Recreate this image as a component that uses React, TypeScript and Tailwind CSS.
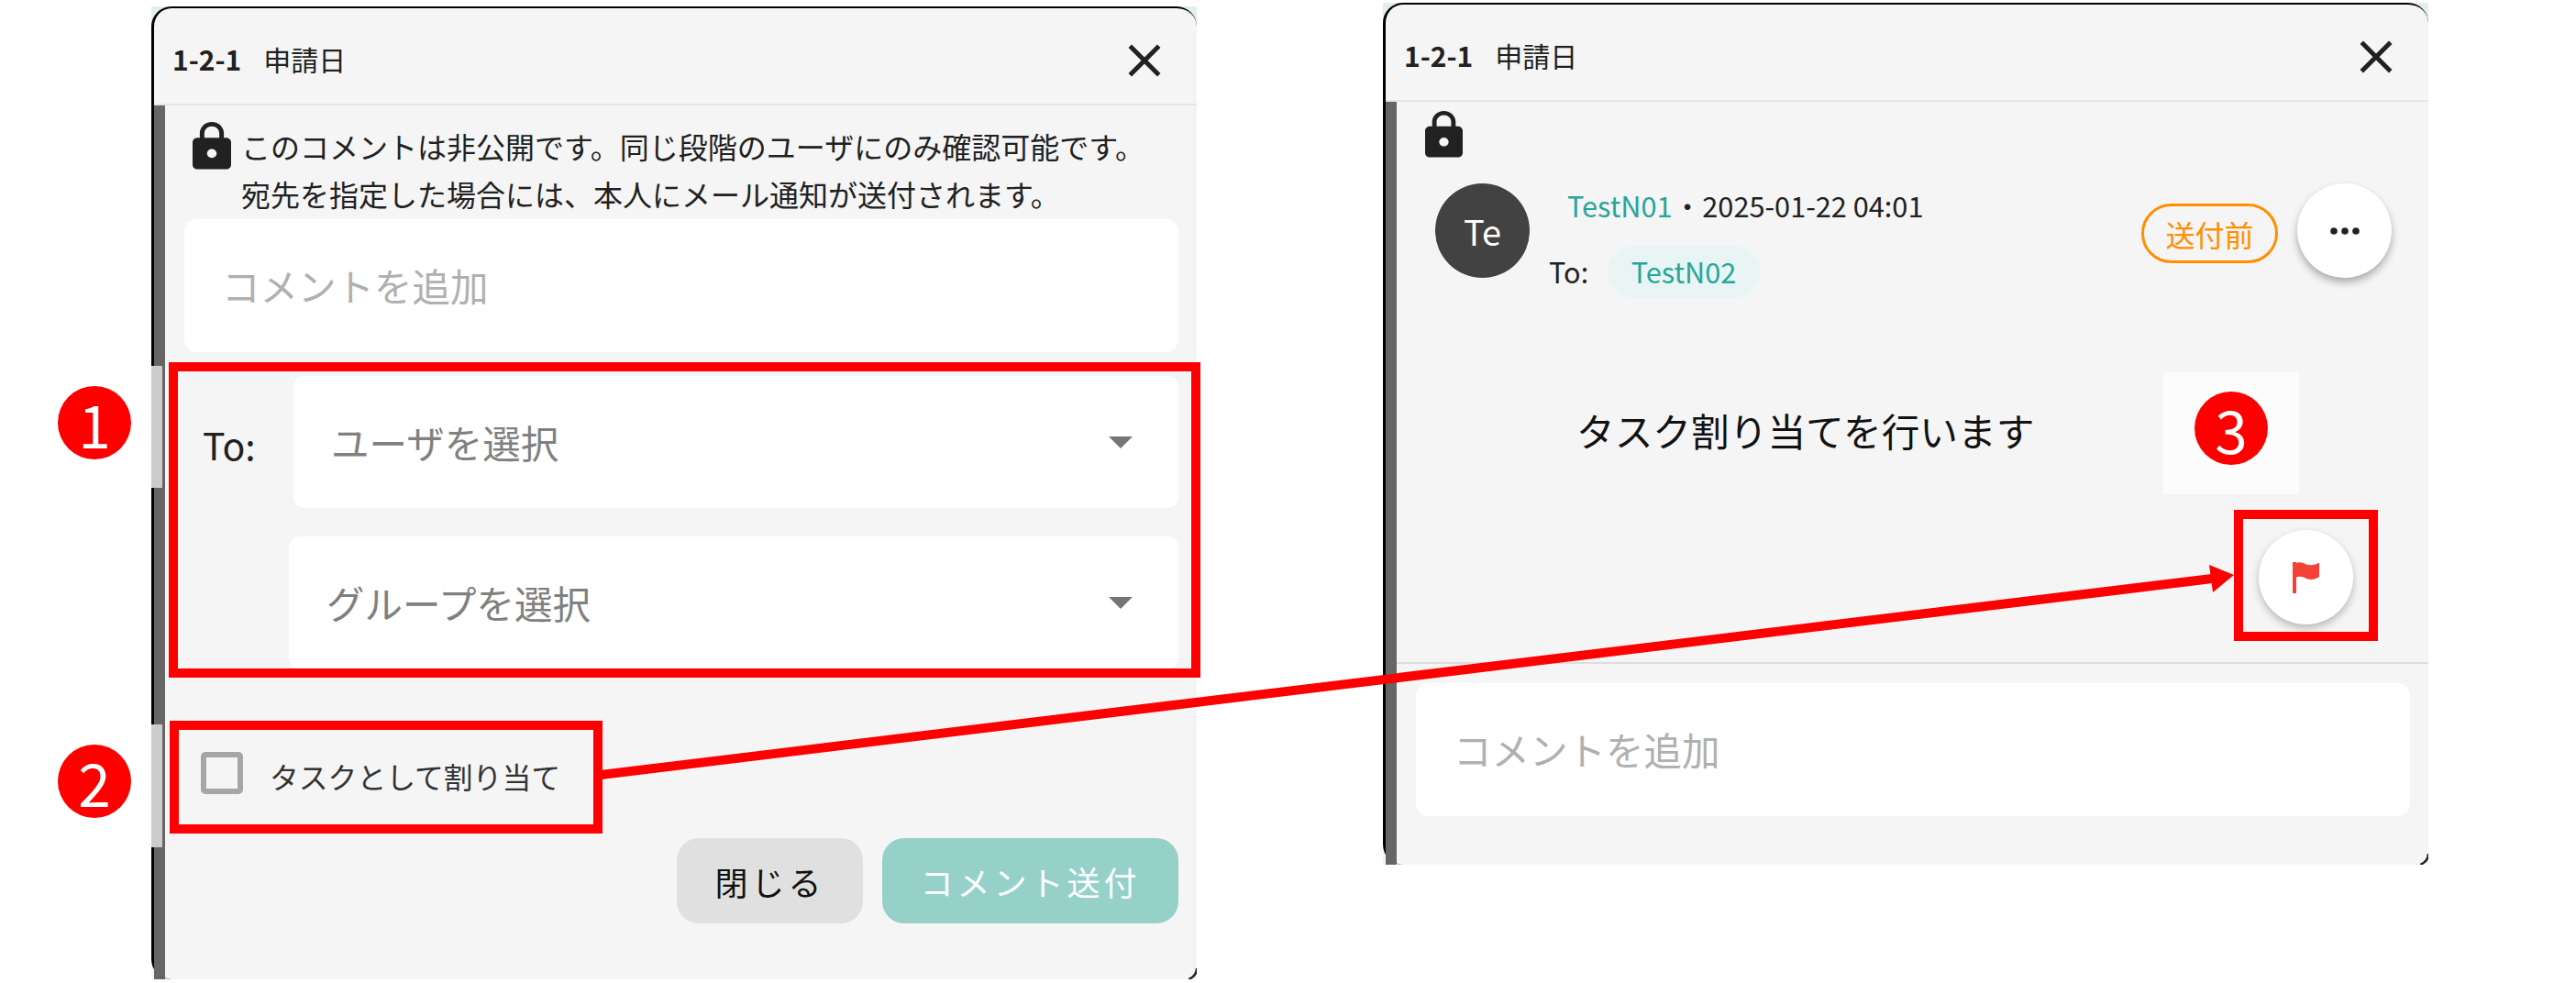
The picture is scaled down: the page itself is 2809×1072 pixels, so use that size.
const FONT = "font-['Noto_Sans_CJK_JP','Noto_Sans',sans-serif]";

function Lock({ className }: { className: string }) {
  return (
    <svg className={className} viewBox="4 1 16 22" preserveAspectRatio="none" fill="#212121">
      <path d="M18 8h-1V6c0-2.76-2.24-5-5-5S7 3.24 7 6v2H6c-1.1 0-2 .9-2 2v10c0 1.1.9 2 2 2h12c1.1 0 2-.9 2-2V10c0-1.1-.9-2-2-2zm-6 9c-1.1 0-2-.9-2-2s.9-2 2-2 2 .9 2 2-.9 2-2 2zm3.1-9H8.9V6c0-1.71 1.39-3.1 3.1-3.1 1.71 0 3.1 1.39 3.1 3.1v2z" />
    </svg>
  );
}

function Header() {
  return (
    <div className="flex h-[106px] shrink-0 items-center justify-between border-b-2 border-[#e4e4e4] pl-[20px] pr-[27px] pt-[9px]">
      <div className="-mt-[4px] flex items-center text-[30px] leading-[40px] text-[#212121]">
        <span className="font-bold">1-2-1</span>
        <span className="ml-[24px]">申請日</span>
      </div>
      <svg className="h-[60px] w-[60px]" viewBox="0 0 24 24" fill="#212121">
        <path d="M19 6.41 17.59 5 12 10.59 6.41 5 5 6.41 10.59 12 5 17.59 6.41 19 12 13.41 17.59 19 19 17.59 13.41 12z" />
      </svg>
    </div>
  );
}

function Select({ label, className }: { label: string; className: string }) {
  return (
    <div className={`flex h-[144px] items-center justify-between rounded-[12px] bg-white pr-[50px] text-[41.5px] text-[#808080] ${className}`}>
      <span>{label}</span>
      <svg className="h-[13px] w-[26px]" viewBox="0 0 26 13" fill="#757575">
        <path d="M0 0h26L13 13z" />
      </svg>
    </div>
  );
}

function Comment({ className }: { className: string }) {
  return (
    <div className={`flex h-[145px] items-center rounded-[14px] bg-white pl-[41px] text-[41.5px] text-[#b0b0b0] ${className}`}>
      コメントを追加
    </div>
  );
}

function Badge({ n, className }: { n: string; className: string }) {
  return (
    <div className={`absolute flex h-[80px] w-[80px] items-center justify-center rounded-full bg-[#ff0000] text-[64px] font-normal leading-none text-white ${className}`}>
      {n}
    </div>
  );
}

function CornerArc() {
  return (
    <svg className="absolute bottom-0 right-0 h-[12px] w-[9px]" viewBox="0 0 9 12" fill="none" stroke="#222222" strokeWidth="2.5">
      <path d="M9 0C9 6 5 10 0 12" />
    </svg>
  );
}

function LeftPanel() {
  return (
    <div className="relative ml-[165px] mt-[7px] h-[1061px] w-[1140px] bg-[linear-gradient(#dff0ee_30px,#f5f5f5_30px)]">
      <div className="flex h-full flex-col rounded-[22px] border-l-[3px] border-t-2 border-black bg-[#f5f5f5]">
        <Header />
        <div className="flex min-h-0 flex-1">
          <div className="w-[12px] shrink-0 bg-[#666666]" />
          <div className="flex-1">
            <div className="flex h-[124px] items-start pl-[30px] pt-[18px]">
              <Lock className="h-[54px] w-[42px] shrink-0" />
              <p className="ml-[11px] whitespace-nowrap text-[32px] leading-[52px] text-[#212121]">
                このコメントは非公開です。同じ段階のユーザにのみ確認可能です。
                <br />
                宛先を指定した場合には、本人にメール通知が送付されます。
              </p>
            </div>
            <Comment className="ml-[21px] mr-[20px]" />
            <div className="mt-[26px] flex items-start pr-[20px]">
              <span className="ml-[41px] mt-[46px] w-[99px] text-[41px] leading-[56px] text-[#212121]">To:</span>
              <Select label="ユーザを選択" className="flex-1 pl-[41px]" />
            </div>
            <div className="mr-[20px] mt-[31px] pl-[135px]">
              <Select label="グループを選択" className="pl-[41px]" />
            </div>
            <div className="mt-[91px] flex items-start pl-[39px]">
              <div className="h-[46px] w-[46px] rounded-[5px] border-[6px] border-[#a6a6a6]" />
              <span className="ml-[29px] mt-[3px] text-[31.8px] leading-[46px] text-[#333333]">タスクとして割り当て</span>
            </div>
            <div className="mt-[45px] flex justify-end gap-[21px] pr-[20px]">
              <div className="flex h-[93px] w-[203px] items-center justify-center rounded-[24px] bg-[#e0e0e0] text-[36px] tracking-[4px] text-[#111111]">
                閉じる
              </div>
              <div className="flex h-[93px] w-[323px] items-center justify-center rounded-[24px] bg-[#96d1c9] text-[36px] tracking-[4px] text-white">
                コメント送付
              </div>
            </div>
          </div>
        </div>
      </div>
      <CornerArc />
    </div>
  );
}

function RightPanel() {
  return (
    <div className="relative ml-[203px] mt-[3px] h-[940px] w-[1140px] bg-[linear-gradient(#dff0ee_30px,#f5f5f5_30px)]">
      <div className="flex h-full flex-col rounded-[22px] border-l-[3px] border-t-2 border-black bg-[#f5f5f5]">
        <Header />
        <div className="flex min-h-0 flex-1">
          <div className="w-[12px] shrink-0 bg-[#666666]" />
          <div className="flex-1">
            <div className="pl-[31px] pt-[10px]">
              <Lock className="h-[53px] w-[41px]" />
            </div>
            <div className="mt-[26px] flex h-[125px] items-start justify-between pl-[42px] pr-[40px]">
              <div className="flex items-start">
                <div className="flex h-[103px] w-[103px] items-center justify-center rounded-full bg-[#424242] text-[38px] text-white">
                  Te
                </div>
                <div className="ml-[21px] flex flex-col">
                  <div className="ml-[20px] -mt-[2px] flex h-[52px] items-center text-[30.7px] text-[#212121]">
                    <span className="text-[#26a69a]">TestN01</span>
                    <span className="mx-[1px]">・</span>
                    <span>2025-01-22 04:01</span>
                  </div>
                  <div className="mt-[18px] flex items-center text-[30.7px] text-[#212121]">
                    <span className="w-[64px]">To:</span>
                    <span className="flex h-[57px] w-[166px] items-center justify-center rounded-full bg-[#e8f5f4] text-[#26a69a]">TestN02</span>
                  </div>
                </div>
              </div>
              <div className="flex items-start gap-[21px]">
                <div className="mt-[22px] flex h-[65px] w-[149px] items-center justify-center rounded-full border-[3px] border-[#ff8f00] text-[32px] text-[#ff8f00]">
                  送付前
                </div>
                <div className="flex h-[103px] w-[103px] items-center justify-center rounded-full bg-white shadow-[0_5px_8px_rgba(0,0,0,0.3)]">
                  <svg className="h-[8px] w-[32px]" viewBox="0 0 32 8" fill="#212121">
                    <circle cx="4" cy="4" r="3.8" />
                    <circle cx="16" cy="4" r="3.8" />
                    <circle cx="28" cy="4" r="3.8" />
                  </svg>
                </div>
              </div>
            </div>
            <div className="mt-[114px] pl-[196px] text-[41.7px] leading-[60px] text-[#111111]">タスク割り当てを行います</div>
            <div className="mt-[79px] flex justify-end pr-[82px]">
              <div className="flex h-[103px] w-[103px] items-center justify-center rounded-full bg-white shadow-[0_4px_8px_rgba(0,0,0,0.25)]">
                <svg className="h-[35px] w-[29px]" viewBox="0 0 29 35" fill="#f44336">
                  <path d="M0 1L4 1L4 2C8 0 12 2 15 3.5C20 5 25 4 29 1.5L29 17C25 20 20 21 15 19C11 17 8 16 4 17.5L4 35L0 35Z" />
                </svg>
              </div>
            </div>
            <div className="mt-[41px] border-t-2 border-[#dddddd]" />
            <Comment className="ml-[21px] mr-[20px] mt-[21px]" />
          </div>
        </div>
      </div>
      <CornerArc />
    </div>
  );
}

export default function App() {
  return (
    <div className={`relative flex h-[1072px] w-[2809px] items-start overflow-hidden bg-white ${FONT}`}>
      <LeftPanel />
      <RightPanel />

      <div className="absolute left-[165px] top-[399px] h-[133px] w-[12px] bg-[#cccccc]" />
      <div className="absolute left-[165px] top-[790px] h-[134px] w-[12px] bg-[#cccccc]" />

      <div className="absolute left-[184px] top-[395px] h-[344px] w-[1125px] border-[10px] border-[#ff0000]" />
      <div className="absolute left-[185px] top-[786px] h-[123px] w-[472px] border-[10px] border-[#ff0000]" />
      <div className="absolute left-[2359px] top-[406px] h-[133px] w-[148px] bg-[#fcfcfc]" />
      <div className="absolute left-[2436px] top-[556px] h-[143px] w-[157px] border-[10px] border-[#ff0000]" />

      <svg className="absolute left-0 top-0 h-[1072px] w-[2809px]" viewBox="0 0 2809 1072">
        <line x1="655" y1="845" x2="2412" y2="631" stroke="#ff0000" strokeWidth="10" />
        <path d="M2436 627L2409 616L2413 646Z" fill="#ff0000" />
      </svg>

      <Badge n="1" className="left-[63px] top-[421px]" />
      <Badge n="2" className="left-[63px] top-[812px]" />
      <Badge n="3" className="left-[2393px] top-[427px]" />
    </div>
  );
}
